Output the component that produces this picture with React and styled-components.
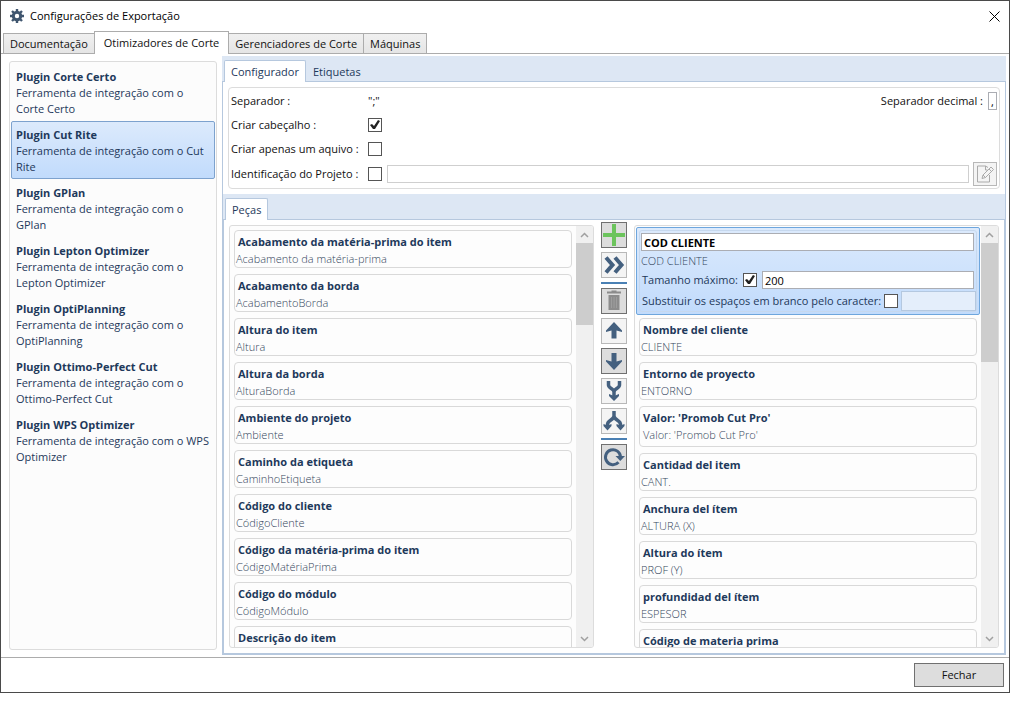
import React, { useState } from "react";
import styled, { createGlobalStyle, css } from "styled-components";

const GlobalStyle = createGlobalStyle`
  * {
    box-sizing: border-box;
  }

  body {
    margin: 0;
    background-color: #ffffff;
    color: #111111;
    font-family: "Open Sans", "Noto Sans", sans-serif;
    font-size: 11px;
    line-height: 16px;
  }

  button,
  input {
    font: inherit;
    color: inherit;
  }
`;

const Page = styled.div`
  display: flex;
  height: 100vh;
  padding: 0 15px 8px 0;
`;

const Window = styled.div`
  flex: 1;
  min-width: 0;
  display: flex;
  flex-direction: column;
  border: 1px solid #4a4a4a;
`;

const TitleBar = styled.header`
  flex: none;
  display: flex;
  align-items: center;
  gap: 5px;
  height: 30px;
  padding: 0 8px;
`;

const Title = styled.h1`
  flex: 1;
  margin: 0;
  font-size: 11px;
  font-weight: 400;
  color: #000000;
`;

const CloseButton = styled.button`
  display: flex;
  padding: 0;
  border: none;
  background: none;
`;

const MainTabs = styled.div`
  flex: none;
  display: flex;
  align-items: flex-end;
  height: 23px;
  margin-bottom: -1px;
  padding-left: 2px;
`;

const MainTab = styled.button`
  height: 21px;
  margin-right: -1px;
  padding: 0 6px;
  border: 1px solid #acacac;
  background: linear-gradient(#f0f0f0, #e5e5e5);
  white-space: nowrap;

  ${({ $active }) =>
    $active &&
    css`
      position: relative;
      height: 23px;
      padding: 0 9px;
      border-bottom: none;
      background: #ffffff;
    `}
`;

const MainPanel = styled.main`
  flex: 1;
  min-height: 0;
  display: grid;
  grid-template-columns: 208px minmax(0, 1fr);
  grid-template-rows: minmax(0, 1fr);
  gap: 5px;
  padding: 2px 3px 2px 8px;
  border-top: 1px solid #acacac;
  border-bottom: 1px solid #acacac;
`;

const PluginList = styled.ul`
  margin: 5px 0;
  padding: 1px;
  border: 1px solid #dcdcdc;
  border-radius: 3px;
  background-color: #fcfcfc;
  list-style: none;
  overflow: hidden;
`;

const PluginButton = styled.button`
  display: block;
  width: 100%;
  padding: 5px 0 3px 4px;
  border: 1px solid transparent;
  border-radius: 2px;
  background: none;
  color: #1e395b;
  text-align: left;

  ${({ $selected }) =>
    $selected &&
    css`
      border-color: #7da2ce;
      background: linear-gradient(#dceafc, #c1dbfc);
    `}
`;

const PluginName = styled.strong`
  display: block;
  font-weight: 700;
`;

const Workspace = styled.section`
  min-width: 0;
  display: flex;
  flex-direction: column;
`;

const SubTabs = styled.div`
  flex: none;
  display: flex;
  align-items: flex-end;
  height: 26px;
  margin-bottom: -1px;
  padding-left: 2px;
  background-color: #dde7f4;
`;

const SubTab = styled.button`
  height: 22px;
  padding: 0 6px;
  border: 1px solid transparent;
  border-bottom: none;
  border-radius: 2px 2px 0 0;
  background: none;
  color: #1e395b;

  ${({ $active }) =>
    $active &&
    css`
      position: relative;
      border-color: #b6c8de;
      background: #ffffff;
    `}
`;

const SubPane = styled.div`
  flex: 1;
  min-height: 0;
  display: flex;
  flex-direction: column;
  border: 1px solid #b6c8de;
`;

const Settings = styled.form`
  flex: none;
  margin: 5px;
  padding: 1px 2px;
  border: 1px solid #dcdcdc;
  border-radius: 4px;
`;

const SettingRow = styled.div`
  display: grid;
  grid-template-columns: 137px minmax(0, 1fr) auto;
  align-items: center;
  height: ${({ $tall }) => ($tall ? "26px" : "24px")};
  white-space: nowrap;
`;

const SettingField = styled.div`
  display: flex;
  align-items: center;
  gap: 5px;
`;

const Checkbox = styled.input.attrs({ type: "checkbox" })`
  flex: none;
  appearance: none;
  width: 14px;
  height: 14px;
  margin: 0;
  border: 1px solid #555555;
  background-color: #ffffff;

  &:checked::after {
    content: "";
    display: block;
    width: 12px;
    height: 12px;
    background-color: #212121;
    clip-path: polygon(
      1px 6px,
      3px 5px,
      5px 7px,
      9px 1px,
      11px 2px,
      6px 10px,
      4px 10px
    );
  }
`;

const TextBox = styled.input.attrs({ type: "text" })`
  flex: 1;
  min-width: 0;
  height: 18px;
  padding: 0 2px;
  border: 1px solid #abadb3;
  background-color: #ffffff;
  color: #000000;

  &:disabled {
    height: 20px;
    border-color: #b4c8e0;
    background-color: #e4eefb;
  }
`;

const ProjectBox = styled(TextBox)`
  border-color: #cfcfcf;
`;

const DecimalBox = styled(TextBox)`
  flex: none;
  width: 9px;
  padding: 0 2px;
`;

const EditButton = styled.button`
  flex: none;
  display: flex;
  align-items: center;
  justify-content: center;
  width: 24px;
  height: 24px;
  margin-left: 4px;
  padding: 0;
  border: 1px solid #b8b8b8;
  background-color: #f4f4f4;
`;

const Transfer = styled.div`
  flex: 1;
  min-height: 0;
  display: grid;
  grid-template-columns: minmax(0, 1fr) 26px minmax(0, 1fr);
  grid-template-rows: minmax(0, 1fr);
  gap: 7px;
  padding: 2px 5px 5px;
`;

const ListBox = styled.div`
  display: flex;
  margin-top: 3px;
  border: 1px solid #dcdcdc;
  border-radius: 3px;
  background-color: #fdfdfd;
  overflow: hidden;
`;

const Fields = styled.ul`
  flex: 1;
  min-width: 0;
  margin: 0;
  padding: 1px;
  list-style: none;
  overflow: hidden;
`;

const FieldItem = styled.li`
  padding: 3px;
  color: #1e395b;

  ${({ $selected }) =>
    $selected &&
    css`
      padding: 2px;
      border: 1px solid #6ea6dd;
      border-radius: 2px;
      background: linear-gradient(#dceafc, #c1dbfc);
    `}
`;

const FieldCard = styled.div`
  padding-top: 2px;
  padding-bottom: ${({ $loose }) => ($loose ? "3px" : "0")};
  border: 1px solid #d9d9d9;
  border-radius: 4px;
`;

const EditCard = styled.div`
  padding: 2px 0 0 1px;
  border: 1px solid #c6d8ee;
  border-radius: 3px;
`;

const FieldName = styled.strong`
  display: block;
  padding-left: 3px;
  font-weight: 700;
  line-height: 18px;
  white-space: nowrap;
`;

const FieldSource = styled.span`
  display: block;
  padding-left: ${({ $loose }) => ($loose ? "3px" : "1px")};
  color: #34465c;
  font-weight: 300;
  line-height: 16px;
  white-space: nowrap;
`;

const EditSource = styled(FieldSource)`
  padding-left: 0;
  line-height: 20px;
`;

const EditRow = styled.div`
  display: flex;
  align-items: center;
  gap: 5px;
  padding: 0 2px 0 1px;
  white-space: nowrap;

  &:last-child {
    gap: 3px;
    margin-top: 2px;
    padding-right: 0;
  }
`;

const NameRow = styled(EditRow)`
  padding-left: 0;
`;

const NameBox = styled(TextBox)`
  font-weight: 700;
`;

const ScrollBar = styled.div`
  flex: none;
  display: flex;
  flex-direction: column;
  width: 17px;
  background-color: #f0f0f0;
`;

const ScrollButton = styled.button`
  flex: none;
  display: flex;
  align-items: center;
  justify-content: center;
  height: 17px;
  padding: 0;
  border: none;
  background: none;
`;

const ScrollTrack = styled.div`
  flex: 1;
`;

const ScrollThumb = styled.div`
  height: ${({ $size }) => $size};
  background-color: #cdcdcd;
`;

const Toolbar = styled.div`
  display: flex;
  flex-direction: column;
  gap: 4px;
`;

const ToolButton = styled.button`
  display: flex;
  width: 26px;
  height: 26px;
  padding: 0;
  border: 1px solid ${({ $dark }) => ($dark ? "#707070" : "#b8b8b8")};
  background-color: ${({ $dark }) => ($dark ? "#dddddd" : "#f4f4f4")};
  color: #44607f;
`;

const ToolDivider = styled.div`
  height: 2px;
  background-color: #4a80b4;
`;

const Footer = styled.footer`
  flex: none;
  display: flex;
  align-items: center;
  justify-content: flex-end;
  height: 34px;
  padding-right: 5px;
`;

const FooterButton = styled.button`
  width: 90px;
  height: 24px;
  padding: 0;
  border: 1px solid #707070;
  background-color: #dddddd;
`;

const MAIN_TABS = [
  "Documentação",
  "Otimizadores de Corte",
  "Gerenciadores de Corte",
  "Máquinas",
];

const PLUGINS = [
  "Corte Certo",
  "Cut Rite",
  "GPlan",
  "Lepton Optimizer",
  "OptiPlanning",
  "Ottimo-Perfect Cut",
  "WPS Optimizer",
];

const AVAILABLE = [
  ["Acabamento da matéria-prima do item", "Acabamento da matéria-prima"],
  ["Acabamento da borda", "AcabamentoBorda"],
  ["Altura do item", "Altura"],
  ["Altura da borda", "AlturaBorda"],
  ["Ambiente do projeto", "Ambiente"],
  ["Caminho da etiqueta", "CaminhoEtiqueta"],
  ["Código do cliente", "CódigoCliente"],
  ["Código da matéria-prima do item", "CódigoMatériaPrima"],
  ["Código do módulo", "CódigoMódulo"],
  ["Descrição do item", "\u00a0"],
];

const EXPORTED = [
  ["Nombre del cliente", "CLIENTE"],
  ["Entorno de proyecto", "ENTORNO"],
  ["Valor: 'Promob Cut Pro'", "Valor: 'Promob Cut Pro'", true],
  ["Cantidad del item", "CANT."],
  ["Anchura del ítem", "ALTURA (X)"],
  ["Altura do ítem", "PROF (Y)"],
  ["profundidad del ítem", "ESPESOR"],
  ["Código de materia prima", "\u00a0"],
];

const TOOLS = [
  {
    label: "Adicionar",
    dark: true,
    icon: <path d="M12 1v22M1 12h22" stroke="#6cc45c" strokeWidth="4" />,
  },
  {
    label: "Adicionar todos",
    icon: (
      <path
        d="M4 4.5l6.5 7.5L4 19.5M13 4.5l6.5 7.5-6.5 7.5"
        stroke="currentColor"
        strokeWidth="4"
      />
    ),
  },
  null,
  {
    label: "Remover",
    dark: true,
    icon: (
      <>
        <path d="M5 3.5h14M9.5 2.5h5" stroke="#8c8c8c" strokeWidth="2" />
        <path d="M6.5 6h11v15h-11z" fill="#8c8c8c" />
        <path d="M9.5 8v11M12 8v11M14.5 8v11" stroke="#9d9d9d" />
      </>
    ),
  },
  {
    label: "Mover para cima",
    icon: (
      <path
        d="M12 3l8 8.5V13l-5.5-1.500V19.500h-5v-8L4 13v-1.500z"
        fill="currentColor"
      />
    ),
  },
  {
    label: "Mover para baixo",
    dark: true,
    icon: (
      <path d="M12 21l8-8.500V11l-5.500 1.500V4h-5v8.500L4 11v1.500z" fill="currentColor" />
    ),
  },
  {
    label: "Unir",
    icon: (
      <>
        <path
          d="M6.500 2v4c0 3.500 5.500 3.500 5.500 7v5M17.500 2v4c0 3.500-5.500 3.500-5.500 7"
          stroke="currentColor"
          strokeWidth="3.500"
        />
        <path d="M7 15l5 2 5-2v2l-5 5-5-5z" fill="currentColor" />
      </>
    ),
  },
  {
    label: "Dividir",
    icon: (
      <>
        <path
          d="M12 2v5c0 4-6.500 4-6.500 8.500V17M12 7c0 4 6.500 4 6.500 8.500V17"
          stroke="currentColor"
          strokeWidth="3.500"
        />
        <path
          d="M1.500 15l4 1.500 4-1.500v2l-4 4.500-4-4.500zM14.500 15l4 1.500 4-1.500v2l-4 4.500-4-4.500z"
          fill="currentColor"
        />
      </>
    ),
  },
  null,
  {
    label: "Restaurar",
    dark: true,
    icon: (
      <>
        <path
          d="M16.500 17.300A7.500 7.500 0 1 1 18.500 12"
          stroke="currentColor"
          strokeWidth="3"
        />
        <path d="M13.500 11H23l-4.700 5z" fill="currentColor" />
      </>
    ),
  },
];

function GearIcon() {
  return (
    <svg width="16" height="16" viewBox="0 0 16 16" fill="none" stroke="#40566f">
      <circle cx="8" cy="8" r="3.7" strokeWidth="3" />
      <path
        d="M8 1v3M8 12v3M1 8h3M12 8h3M3 3l2 2M11 11l2 2M3 13l2-2M11 5l2-2"
        strokeWidth="2.4"
      />
    </svg>
  );
}

function ScrollArrow({ down }) {
  return (
    <svg width="9" height="6" viewBox="0 0 9 6" fill="none" stroke="#a0a0a0">
      <path d={down ? "M1 1l3.5 3.5L8 1" : "M1 5l3.5-3.5L8 5"} strokeWidth="1.5" />
    </svg>
  );
}

// Lista com barra de rolagem
function FieldList({ items, thumb, children }) {
  return (
    <ListBox>
      <Fields>
        {children}
        {items.map(([name, source, loose]) => (
          <FieldItem key={name}>
            <FieldCard $loose={loose}>
              <FieldName>{name}</FieldName>
              <FieldSource $loose={loose}>{source}</FieldSource>
            </FieldCard>
          </FieldItem>
        ))}
      </Fields>
      <ScrollBar>
        <ScrollButton type="button" aria-label="Rolar para cima">
          <ScrollArrow />
        </ScrollButton>
        <ScrollTrack>
          <ScrollThumb $size={thumb} />
        </ScrollTrack>
        <ScrollButton type="button" aria-label="Rolar para baixo">
          <ScrollArrow down />
        </ScrollButton>
      </ScrollBar>
    </ListBox>
  );
}

// Campo selecionado, em edição
function SelectedField() {
  return (
    <FieldItem $selected>
      <EditCard>
        <NameRow>
          <NameBox aria-label="Nome do campo" defaultValue="COD CLIENTE" />
        </NameRow>
        <EditSource>COD CLIENTE</EditSource>
        <EditRow>
          <label htmlFor="limit">Tamanho máximo:</label>
          <Checkbox id="limit" defaultChecked />
          <TextBox aria-label="Tamanho" defaultValue="200" />
        </EditRow>
        <EditRow>
          <label htmlFor="replace">
            Substituir os espaços em branco pelo caracter:
          </label>
          <Checkbox id="replace" />
          <TextBox aria-label="Caracter" disabled />
        </EditRow>
      </EditCard>
    </FieldItem>
  );
}

function SettingsForm() {
  return (
    <Settings>
      <SettingRow>
        <span>Separador :</span>
        <span>";"</span>
        <SettingField>
          <label htmlFor="decimal">Separador decimal :</label>
          <DecimalBox id="decimal" defaultValue="," />
        </SettingField>
      </SettingRow>
      <SettingRow>
        <label htmlFor="header">Criar cabeçalho :</label>
        <Checkbox id="header" defaultChecked />
      </SettingRow>
      <SettingRow>
        <label htmlFor="single">Criar apenas um aquivo :</label>
        <Checkbox id="single" />
      </SettingRow>
      <SettingRow $tall>
        <label htmlFor="project">Identificação do Projeto :</label>
        <SettingField>
          <Checkbox id="project" />
          <ProjectBox aria-label="Projeto" />
        </SettingField>
        <EditButton type="button" aria-label="Editar">
          <svg width="20" height="20" viewBox="0 0 20 20" fill="none" stroke="#aaaaaa">
            <path d="M13 3.5L10.5 2h-8v16h12v-7M10.5 2v4h2" />
            <path d="M7 14.500l1-3.500 8-8 2.500 2.500-8 8zM14 5l2.500 2.500M8 11l2.500 2.500" />
          </svg>
        </EditButton>
      </SettingRow>
    </Settings>
  );
}

function App() {
  const [tab, setTab] = useState("Otimizadores de Corte");
  const [plugin, setPlugin] = useState("Cut Rite");

  return (
    <>
      <GlobalStyle />
      <Page>
        <Window>
          <TitleBar>
            <GearIcon />
            <Title>Configurações de Exportação</Title>
            <CloseButton type="button" aria-label="Fechar janela">
              <svg width="13" height="13" viewBox="0 0 13 13" stroke="#000000">
                <path d="M1.5 1.5l10 10M11.5 1.5l-10 10" />
              </svg>
            </CloseButton>
          </TitleBar>
          <MainTabs role="tablist">
            {MAIN_TABS.map((name) => (
              <MainTab
                key={name}
                type="button"
                role="tab"
                aria-selected={name === tab}
                $active={name === tab}
                onClick={() => setTab(name)}
              >
                {name}
              </MainTab>
            ))}
          </MainTabs>
          <MainPanel>
            <PluginList>
              {PLUGINS.map((name) => (
                <li key={name}>
                  <PluginButton
                    type="button"
                    $selected={name === plugin}
                    onClick={() => setPlugin(name)}
                  >
                    <PluginName>Plugin {name}</PluginName>
                    Ferramenta de integração com o {name}
                  </PluginButton>
                </li>
              ))}
            </PluginList>
            <Workspace>
              <SubTabs role="tablist">
                <SubTab type="button" role="tab" aria-selected $active>
                  Configurador
                </SubTab>
                <SubTab type="button" role="tab">
                  Etiquetas
                </SubTab>
              </SubTabs>
              <SubPane>
                <SettingsForm />
                <SubTabs role="tablist">
                  <SubTab type="button" role="tab" aria-selected $active>
                    Peças
                  </SubTab>
                </SubTabs>
                <SubPane>
                  <Transfer>
                    <FieldList items={AVAILABLE} thumb="82px" />
                    <Toolbar>
                      {TOOLS.map((tool, index) =>
                        tool ? (
                          <ToolButton
                            key={tool.label}
                            type="button"
                            aria-label={tool.label}
                            $dark={tool.dark}
                          >
                            <svg width="24" height="24" viewBox="0 0 24 24" fill="none">
                              {tool.icon}
                            </svg>
                          </ToolButton>
                        ) : (
                          <ToolDivider key={index} />
                        )
                      )}
                    </Toolbar>
                    <FieldList items={EXPORTED} thumb="119px">
                      <SelectedField />
                    </FieldList>
                  </Transfer>
                </SubPane>
              </SubPane>
            </Workspace>
          </MainPanel>
          <Footer>
            <FooterButton type="button">Fechar</FooterButton>
          </Footer>
        </Window>
      </Page>
    </>
  );
}

export default App;
